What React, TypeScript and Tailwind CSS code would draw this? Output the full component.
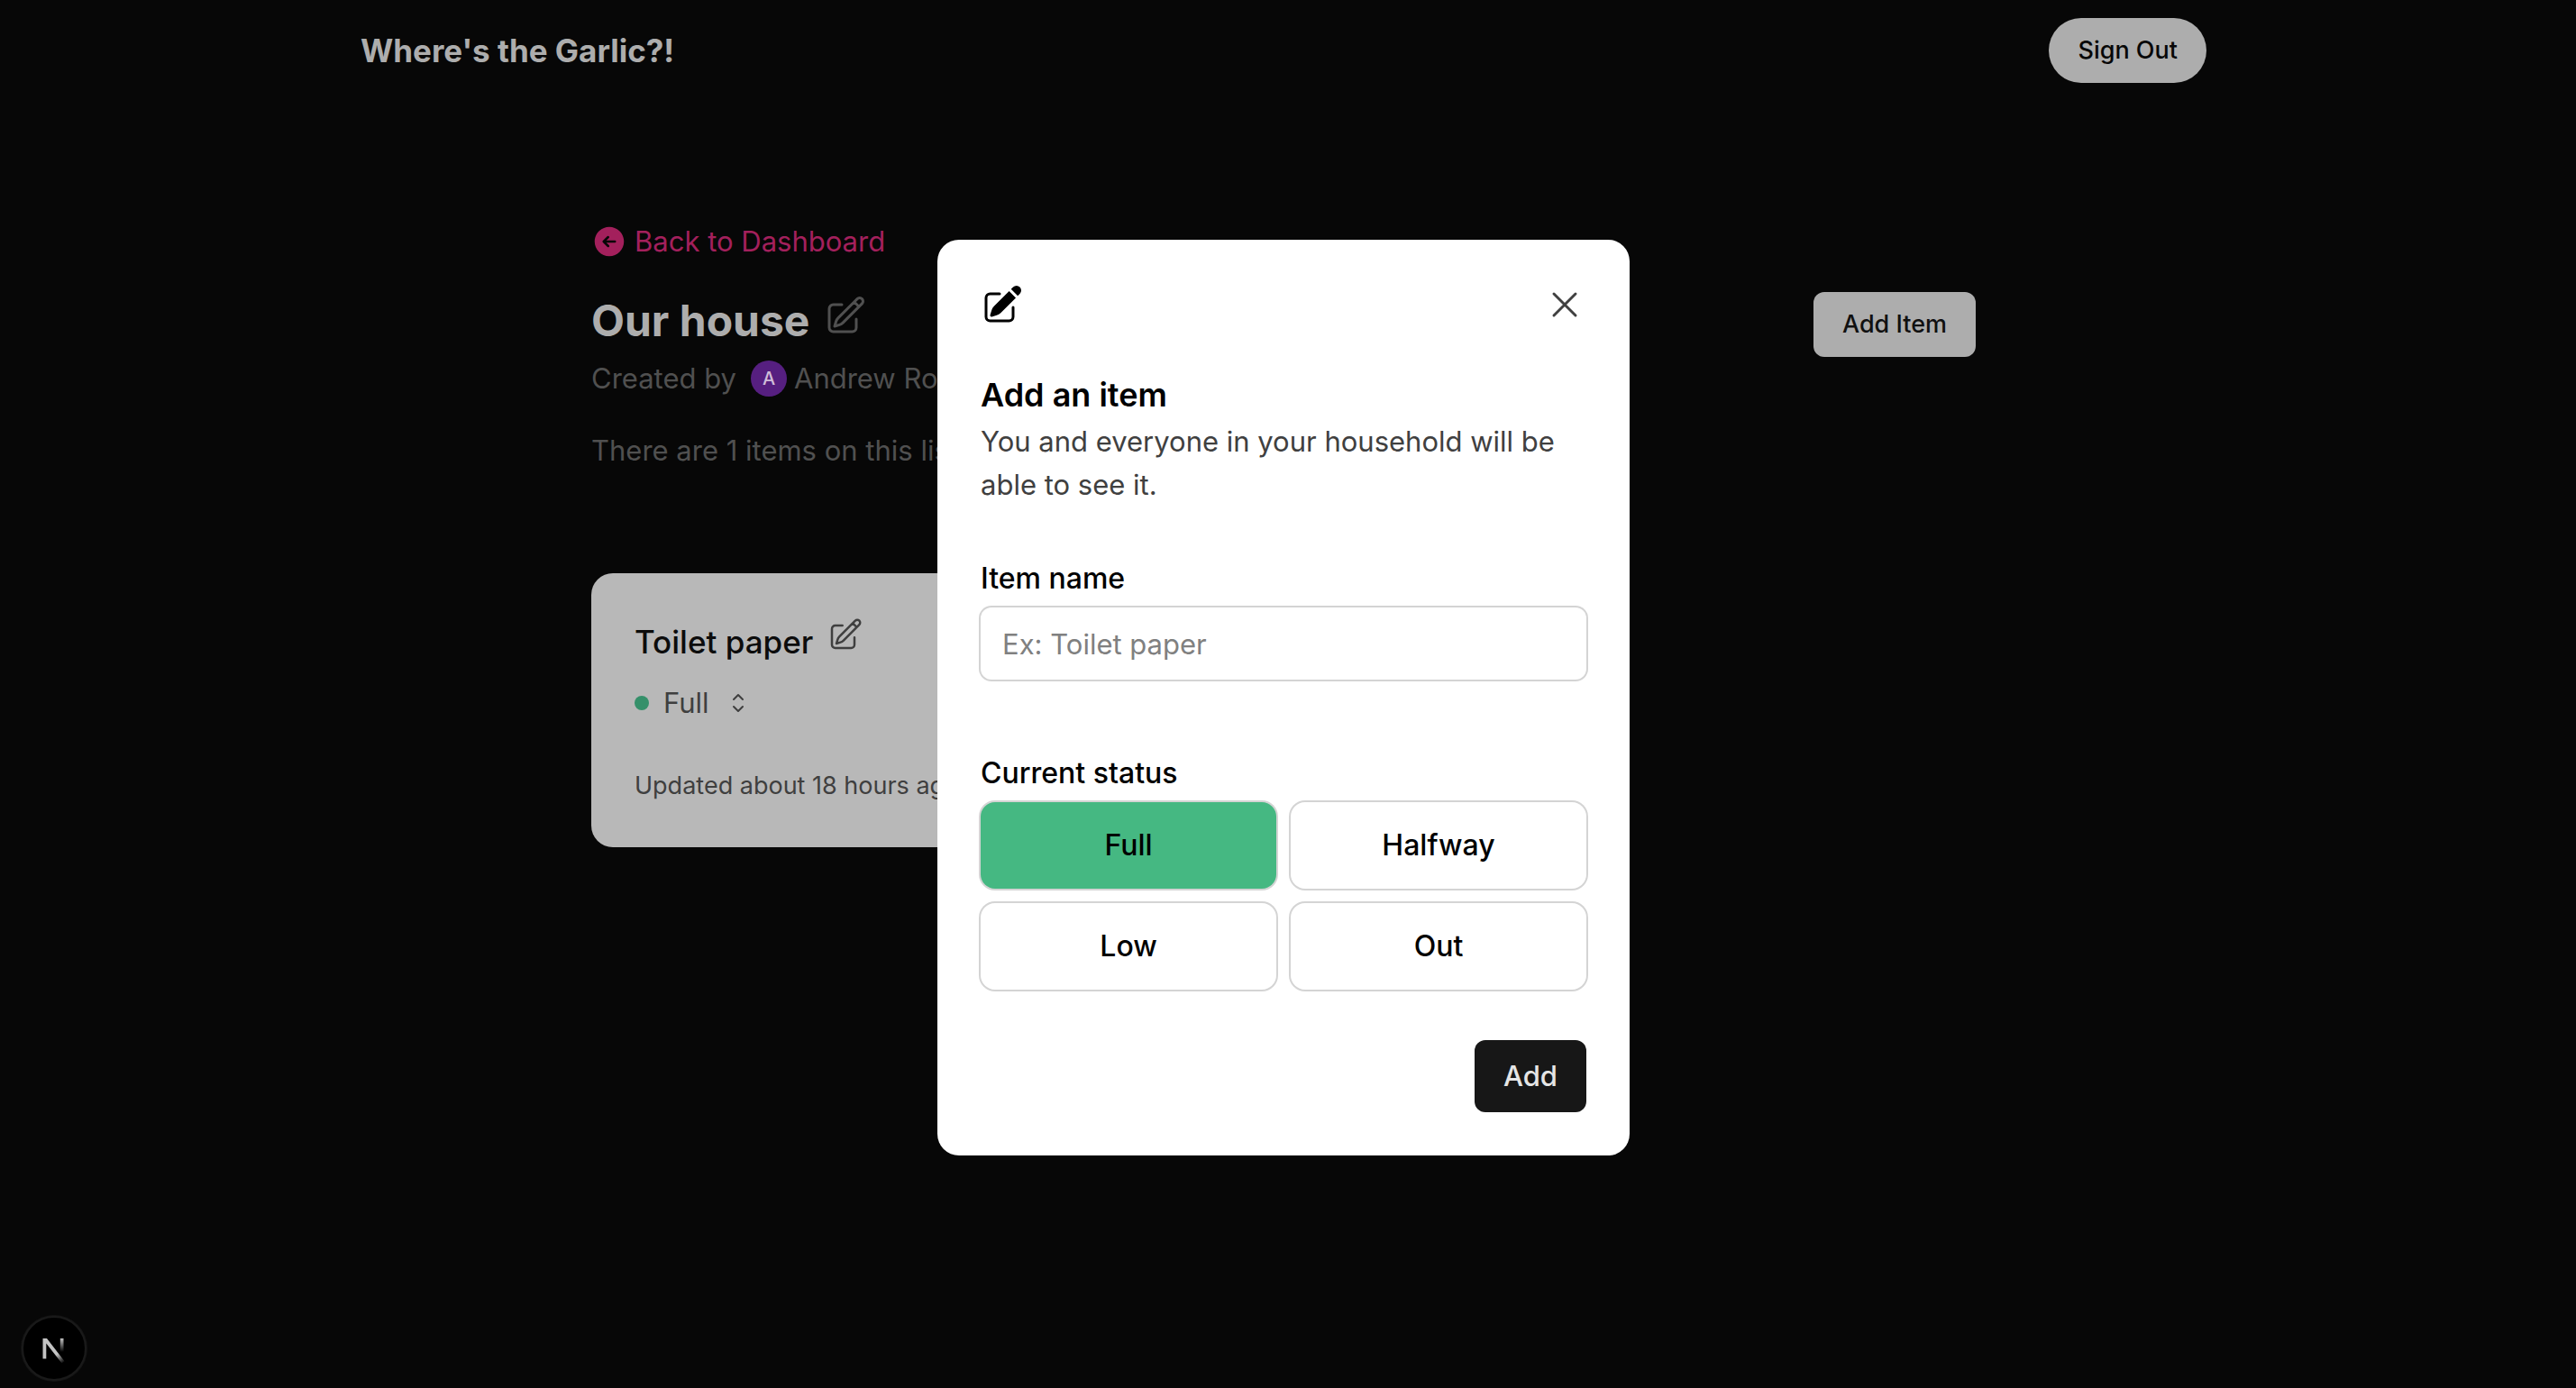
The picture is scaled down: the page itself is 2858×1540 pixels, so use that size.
import React, { useState } from "react";
import {
  HiArrowLeftCircle,
  HiOutlineChevronUpDown,
  HiOutlinePencilSquare,
  HiOutlineXMark,
  HiPencilSquare,
} from "react-icons/hi2";

const statuses = ["Full", "Halfway", "Low", "Out"];

function Header() {
  return (
    <header className="mx-auto flex h-28 max-w-[2048px] items-center justify-between">
      <a href="#home" className="text-[35px] font-bold leading-[56px] text-[#adadad]">
        Where's the Garlic?!
      </a>
      <button
        type="button"
        className="h-[72px] rounded-full bg-[#adadad] px-8 text-[27px] font-medium leading-10 text-[#070707]"
      >
        Sign Out
      </button>
    </header>
  );
}

function ItemCard() {
  return (
    <article className="rounded-3xl bg-[#b8b8b8] p-12">
      <div className="flex items-start gap-4">
        <h2 className="text-[35px] font-medium leading-[56px] text-[#0c0c0c]">Toilet paper</h2>
        <button type="button" aria-label="Edit item" className="text-[#3f3f3f]">
          <HiOutlinePencilSquare className="size-10" />
        </button>
      </div>
      <button
        type="button"
        aria-label="Change status"
        className="mt-4 flex items-center text-[31px] leading-[48px] text-[#3f3f3f]"
      >
        <span className="mr-4 size-4 rounded-full bg-[#35906a]" />
        Full
        <HiOutlineChevronUpDown className="ml-4 size-8" />
      </button>
      <p className="mt-12 whitespace-nowrap text-[27px] leading-10 text-[#3f3f3f]">
        Updated about 18 hours ago
      </p>
    </article>
  );
}

function Household() {
  return (
    <main className="mx-auto max-w-[1536px] pt-[132px] text-[31px] leading-[48px] text-[#505050]">
      <a href="#dashboard" className="flex w-fit items-center gap-2 text-[#a3205c]">
        <HiArrowLeftCircle className="size-10" />
        Back to Dashboard
      </a>
      <div className="mt-7 flex items-start justify-between">
        <div>
          <div className="flex items-start gap-4">
            <h1 className="text-[48px] font-bold leading-[72px] text-[#adadad]">Our house</h1>
            <button type="button" aria-label="Edit household" className="mt-1.5">
              <HiOutlinePencilSquare className="size-12" />
            </button>
          </div>
          <p className="mt-1 flex items-center">
            Created by
            <span className="ml-4 mr-2 flex size-10 items-center justify-center rounded-full bg-[#561f80] text-[20px] font-medium leading-none text-[#d0bcd8]">
              A
            </span>
            Andrew Ro
          </p>
          <p className="mt-8">There are 1 items on this list.</p>
        </div>
        <button
          type="button"
          className="mt-1 h-[72px] rounded-xl bg-[#adadad] px-8 text-[27px] font-medium leading-10 text-[#101010]"
        >
          Add Item
        </button>
      </div>
      <section className="mt-28 grid grid-cols-3 gap-8">
        <ItemCard />
      </section>
    </main>
  );
}

function AddItemDialog() {
  const [status, setStatus] = useState("Full");
  return (
    <div className="fixed inset-0 flex items-center justify-center pr-2.5 pt-2">
      <form
        role="dialog"
        aria-labelledby="dialog-title"
        onSubmit={(e) => e.preventDefault()}
        className="w-[768px] rounded-3xl bg-white p-12 text-[32px] leading-[48px] text-black"
      >
        <div className="flex justify-between">
          <HiPencilSquare className="size-12" />
          <button type="button" aria-label="Close" className="text-[#404040]">
            <HiOutlineXMark className="size-12" />
          </button>
        </div>
        <h2 id="dialog-title" className="mt-12 text-[36px] font-semibold leading-[56px]">
          Add an item
        </h2>
        <p className="text-[31px] text-[#404040]">
          You and everyone in your household will be able to see it.
        </p>
        <label htmlFor="item-name" className="mt-14 block font-medium">
          Item name
        </label>
        <input
          id="item-name"
          type="text"
          placeholder="Ex: Toilet paper"
          className="mt-2 block h-20 w-full rounded-xl px-6 text-[31px] outline-none ring-2 ring-[#d4d4d4] placeholder:text-[#808080]"
        />
        <fieldset className="mt-20">
          <legend className="font-medium">Current status</legend>
          <div className="mt-2 grid grid-cols-2 gap-4">
            {statuses.map((name) => (
              <label
                key={name}
                className="flex h-24 cursor-pointer items-center justify-center rounded-2xl font-medium ring-2 ring-[#d4d4d4] has-checked:bg-[#45b882]"
              >
                <input
                  type="radio"
                  name="status"
                  value={name}
                  checked={status === name}
                  onChange={() => setStatus(name)}
                  className="sr-only"
                />
                {name}
              </label>
            ))}
          </div>
        </fieldset>
        <div className="mt-14 flex justify-end">
          <button
            type="submit"
            className="h-20 rounded-xl bg-[#171717] px-8 text-[31px] font-medium text-[#e5e5e5]"
          >
            Add
          </button>
        </div>
      </form>
    </div>
  );
}

function DevBadge() {
  return (
    <button
      type="button"
      aria-label="Open developer tools"
      className="fixed bottom-2 left-6 flex size-[72px] items-center justify-center rounded-full border-2 border-[#1a1a1a] bg-black ring-1 ring-[#141414]"
    >
      <svg viewBox="0 0 72 72" className="size-[72px] shrink-0" fill="none" aria-hidden="true">
        <defs>
          <linearGradient id="diag" x1="40" y1="42" x2="47" y2="52" gradientUnits="userSpaceOnUse">
            <stop stopColor="#c4c4c4" />
            <stop offset="1" stopColor="#c4c4c4" stopOpacity="0" />
          </linearGradient>
          <linearGradient id="stem" x1="45" y1="25" x2="45" y2="40" gradientUnits="userSpaceOnUse">
            <stop stopColor="#c4c4c4" />
            <stop offset="1" stopColor="#c4c4c4" stopOpacity="0" />
          </linearGradient>
        </defs>
        <path d="M23.5 25h4.5L47.5 50.3 44.5 52.5 27.3 30.4V47.5h-3.8Z" fill="url(#diag)" />
        <path d="M42.8 25h3.7v16h-3.7Z" fill="url(#stem)" />
      </svg>
    </button>
  );
}

export default function App() {
  return (
    <div className="min-h-screen bg-[#070707] pr-2.5 font-[Inter,'Liberation_Sans',sans-serif]">
      <Header />
      <Household />
      <AddItemDialog />
      <DevBadge />
    </div>
  );
}
